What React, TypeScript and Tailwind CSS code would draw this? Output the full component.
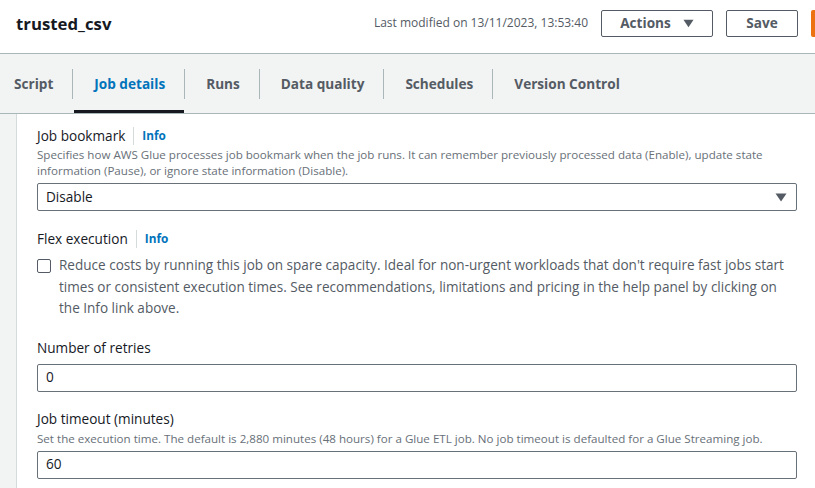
const font = { fontFamily: '"Open Sans", "Noto Sans", Arial, sans-serif' };

const tabs = ['Script', 'Job details', 'Runs', 'Data quality', 'Schedules', 'Version Control'];

function Caret({ className }: { className?: string }) {
  return (
    <svg viewBox="0 0 12 9" className={className} aria-hidden>
      <path d="M0.5 0.5h11L6 8.5z" fill="currentColor" />
    </svg>
  );
}

function FieldLabel({ text, info }: { text: string; info?: boolean }) {
  return (
    <div className="flex items-center h-[22px] text-[13.6px] text-[#16191f]">
      <span>{text}</span>
      {info && (
        <>
          <span className="mx-[8px] h-[18px] w-px bg-[#d5dbdb]" />
          <span className="text-[11.8px] font-bold text-[#0073bb]">Info</span>
        </>
      )}
    </div>
  );
}

function TextBox({ value }: { value: string }) {
  return (
    <div className="flex h-[28px] items-center rounded-[2px] border border-[#687078] bg-white px-[8px] text-[13.6px] text-[#16191f]">
      {value}
    </div>
  );
}

export default function App() {
  return (
    <div className="h-[488px] w-[815px] overflow-hidden bg-white" style={font}>
      <header className="flex h-[54px] items-center border-b border-[#aab7b8] pl-4">
        <h1 className="flex-1 text-[16.8px] font-bold text-[#16191f] pb-[5px]">trusted_csv</h1>
        <div className="flex shrink-0 items-center pb-[7px]">
          <span className="mr-[13px] text-[12px] text-[#545b64]">Last modified on 13/11/2023, 13:53:40</span>
          <button className="mr-[13px] flex h-[27px] w-[112px] items-center justify-center gap-[12px] rounded-[2px] border border-[#545b64] text-[13.6px] font-bold text-[#545b64]">
            Actions
            <Caret className="h-[9px] w-[11px]" />
          </button>
          <button className="mr-[13px] h-[27px] w-[72px] rounded-[2px] border border-[#545b64] text-[13.6px] font-bold text-[#545b64]">
            Save
          </button>
          {/* primary button, cut off by the window edge */}
          <button aria-label="Run" className="h-[27px] w-[4px] rounded-l-[2px] bg-[#ec7211]" />
        </div>
      </header>

      <nav className="flex h-[60px] items-center border-b border-[#aab7b8] bg-[#f2f3f3]">
        {tabs.map((tab, i) => (
          <div key={tab} className="flex h-full items-center">
            {i > 0 && <span className="h-[30px] w-px bg-[#aab7b8]" />}
            <div
              className={
                'relative flex h-full items-center pt-[2px] text-[13.6px] font-bold ' +
                (i === 0 ? 'pl-[14px] pr-[19px] ' : 'pl-[21px] pr-[19px] ') +
                (i === 1 ? 'text-[#0073bb]' : 'text-[#545b64]')
              }
            >
              {tab}
              {i === 1 && <span className="absolute bottom-0 left-[1px] right-0 h-[3px] bg-[#16191f]" />}
            </div>
          </div>
        ))}
      </nav>

      <div className="flex h-[374px]">
        <aside className="w-[17px] shrink-0 border-r border-[#d5dbdb] bg-[#f2f3f3]" />
        <main className="flex-1 pl-[20px] pr-[18px] pt-[11px]">
          <FieldLabel text="Job bookmark" info />
          <p className="text-[11.6px] leading-[16px] text-[#687078]">
            Specifies how AWS Glue processes job bookmark when the job runs. It can remember previously processed data (Enable), update state information (Pause), or ignore state information (Disable).
          </p>
          <div className="mt-[4px] flex h-[28px] items-center justify-between rounded-[2px] border border-[#687078] pl-[8px] pr-[9px] text-[13.6px] text-[#16191f]">
            Disable
            <Caret className="h-[9px] w-[12px] text-[#545b64]" />
          </div>

          <div className="mt-[17px]">
            <FieldLabel text="Flex execution" info />
          </div>
          <label className="mt-[5px] flex gap-[8px] text-[13.55px] leading-[21.5px] text-[#545b64]">
            <span className="mt-[4px] h-[14px] w-[14px] shrink-0 rounded-[2px] border border-[#545b64] bg-white" />
            <span>
              Reduce costs by running this job on spare capacity. Ideal for non-urgent workloads that don't require fast jobs start times or consistent execution times. See recommendations, limitations and pricing in the help panel by clicking on the Info link above.
            </span>
          </label>

          <div className="mt-[18px]">
            <FieldLabel text="Number of retries" />
          </div>
          <div className="mt-[4px]">
            <TextBox value="0" />
          </div>

          <div className="mt-[17px]">
            <FieldLabel text="Job timeout (minutes)" />
          </div>
          <p className="text-[11.6px] leading-[16px] text-[#687078]">
            Set the execution time. The default is 2,880 minutes (48 hours) for a Glue ETL job. No job timeout is defaulted for a Glue Streaming job.
          </p>
          <div className="mt-[4px]">
            <TextBox value="60" />
          </div>
        </main>
      </div>
    </div>
  );
}
